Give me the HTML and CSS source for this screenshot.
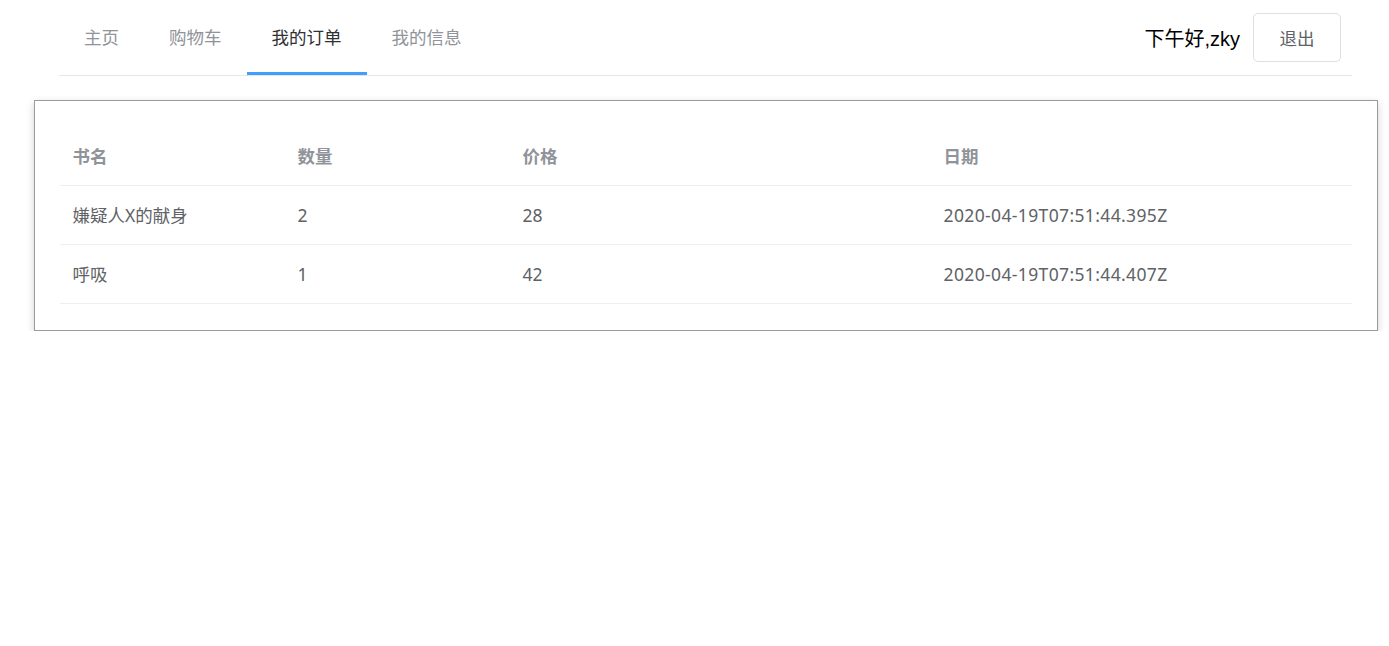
FILE: index.html
```html
<!DOCTYPE html>
<html lang="zh">
<head>
<meta charset="utf-8">
<title>我的订单</title>
<link rel="stylesheet" href="styles.css">
</head>
<body>
<header class="header">
  <nav class="menu">
    <a class="menu-item">主页</a>
    <a class="menu-item">购物车</a>
    <a class="menu-item active">我的订单</a>
    <a class="menu-item">我的信息</a>
  </nav>
  <div class="user">
    <span class="greet">下午好,zky</span>
    <button class="btn">退出</button>
  </div>
</header>
<main class="card">
  <table class="table">
    <colgroup>
      <col class="c-name"><col class="c-qty"><col class="c-price"><col class="c-date">
    </colgroup>
    <thead>
      <tr><th>书名</th><th>数量</th><th>价格</th><th>日期</th></tr>
    </thead>
    <tbody>
      <tr><td>嫌疑人X的献身</td><td>2</td><td>28</td><td class="date">2020-04-19T07:51:44.395Z</td></tr>
      <tr><td>呼吸</td><td>1</td><td>42</td><td class="date">2020-04-19T07:51:44.407Z</td></tr>
    </tbody>
  </table>
</main>
</body>
</html>
```
FILE: styles.css
```css
* { box-sizing: border-box; }
body {
  margin: 0;
  font-family: "Noto Sans", "Noto Sans CJK SC", sans-serif;
  background: #fff;
}
.header {
  display: flex;
  align-items: center;
  justify-content: space-between;
  margin: 0 37px 0 59px;
  height: 76px;
  border-bottom: 1px solid #e6e6e6;
}
.menu {
  display: flex;
  height: 75px;
}
.menu-item {
  display: flex;
  align-items: center;
  padding: 0 25px;
  height: 75px;
  font-size: 17.5px;
  color: #909399;
  border-bottom: 3px solid transparent;
  padding-top: 1px;
}
.menu-item.active {
  color: #303133;
  border-bottom-color: #409eff;
}
.user {
  display: flex;
  align-items: center;
  gap: 13px;
  padding-right: 11px;
  margin-top: -1px;
}
.greet {
  font-family: "Liberation Sans", "Noto Sans CJK SC", sans-serif;
  font-size: 20px;
  color: #000;
}
.btn {
  font-family: inherit;
  font-size: 17.5px;
  color: #606266;
  background: #fff;
  border: 1px solid #dcdfe6;
  border-radius: 5px;
  height: 49px;
  width: 88px;
  padding: 0;
}
.card {
  margin: 24px 11px 0 34px;
  border: 1px solid #9a9a9a;
  box-shadow: 0 3px 8px rgba(0,0,0,0.18);
  padding: 25px 25px 26px;
  background: #fff;
}
.table {
  width: 100%;
  border-collapse: collapse;
  table-layout: fixed;
  font-size: 17.5px;
}
.c-name, .c-qty { width: 225px; }
.table th, .table td {
  text-align: left;
  padding: 0 12.5px;
  height: 59px;
  border-bottom: 1px solid #ebeef5;
}
.table th {
  font-weight: bold;
  color: #909399;
}
.table td { color: #606266; }
.table td.date { letter-spacing: 0.37px; }
```
